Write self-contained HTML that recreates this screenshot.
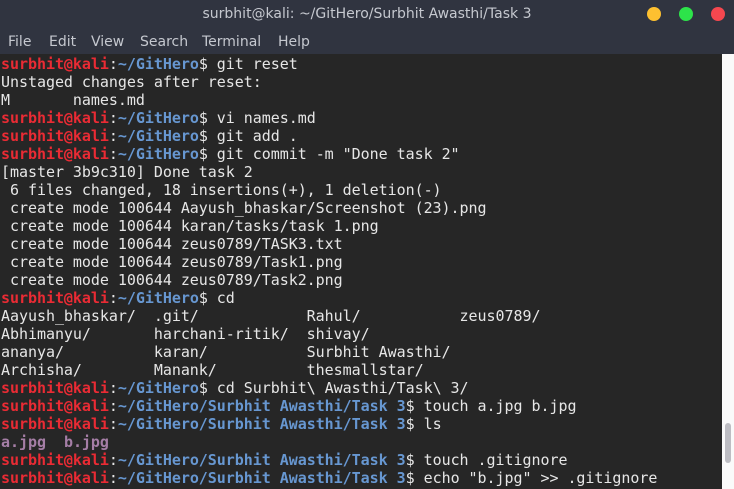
<!DOCTYPE html>
<html><head><meta charset="utf-8"><style>
*{margin:0;padding:0;box-sizing:border-box}
body{width:734px;height:489px;overflow:hidden;background:#262626;position:relative;font-family:"DejaVu Sans",sans-serif}
.title{position:absolute;left:0;top:0;width:734px;height:30px;background:#303440;color:#c5c8cf;font-size:14px;text-align:center;line-height:28px}
.dot{position:absolute;top:7px;width:14px;height:14px;border-radius:50%}
.menu{position:absolute;left:0;top:30px;width:734px;height:24px;background:#303440;color:#c5c8cf;font-size:14px;line-height:25px}
.menu span{position:absolute;top:0}
.term{position:absolute;left:1px;top:55px;width:720px;height:434px;font-family:"DejaVu Sans Mono","Liberation Mono",monospace;font-size:15px;letter-spacing:-0.04px;line-height:18px;color:#e6e6e6;white-space:pre}
.r{color:#ea2b34;font-weight:bold}.b{color:#6797d1;font-weight:bold}.p{color:#a57ea6;font-weight:bold}
.sb{position:absolute;left:722px;top:54px;width:12px;height:435px;background:#fafafa}
.th{position:absolute;left:725px;top:423px;width:6px;height:40px;border-radius:3px;background:#bdbdc3}
</style></head><body>
<div class="title">surbhit@kali: ~/GitHero/Surbhit Awasthi/Task 3</div>
<div class="dot" style="left:647px;background:#fdc030"></div>
<div class="dot" style="left:679px;background:#2de34a"></div>
<div class="dot" style="left:711px;background:#f5474f"></div>
<div class="menu"><span style="left:8px">File</span><span style="left:49px">Edit</span><span style="left:91px">View</span><span style="left:140px">Search</span><span style="left:202px">Terminal</span><span style="left:278px">Help</span></div>
<div class="term"><span class="r">surbhit@kali</span>:<span class="b">~/GitHero</span>$ git reset
Unstaged changes after reset:
M       names.md
<span class="r">surbhit@kali</span>:<span class="b">~/GitHero</span>$ vi names.md
<span class="r">surbhit@kali</span>:<span class="b">~/GitHero</span>$ git add .
<span class="r">surbhit@kali</span>:<span class="b">~/GitHero</span>$ git commit -m "Done task 2"
[master 3b9c310] Done task 2
 6 files changed, 18 insertions(+), 1 deletion(-)
 create mode 100644 Aayush_bhaskar/Screenshot (23).png
 create mode 100644 karan/tasks/task 1.png
 create mode 100644 zeus0789/TASK3.txt
 create mode 100644 zeus0789/Task1.png
 create mode 100644 zeus0789/Task2.png
<span class="r">surbhit@kali</span>:<span class="b">~/GitHero</span>$ cd
Aayush_bhaskar/  .git/            Rahul/           zeus0789/
Abhimanyu/       harchani-ritik/  shivay/
ananya/          karan/           Surbhit Awasthi/
Archisha/        Manank/          thesmallstar/
<span class="r">surbhit@kali</span>:<span class="b">~/GitHero</span>$ cd Surbhit\ Awasthi/Task\ 3/
<span class="r">surbhit@kali</span>:<span class="b">~/GitHero/Surbhit Awasthi/Task 3</span>$ touch a.jpg b.jpg
<span class="r">surbhit@kali</span>:<span class="b">~/GitHero/Surbhit Awasthi/Task 3</span>$ ls
<span class="p">a.jpg</span>  <span class="p">b.jpg</span>
<span class="r">surbhit@kali</span>:<span class="b">~/GitHero/Surbhit Awasthi/Task 3</span>$ touch .gitignore
<span class="r">surbhit@kali</span>:<span class="b">~/GitHero/Surbhit Awasthi/Task 3</span>$ echo "b.jpg" &gt;&gt; .gitignore</div>
<div class="sb"></div><div class="th"></div>
</body></html>
